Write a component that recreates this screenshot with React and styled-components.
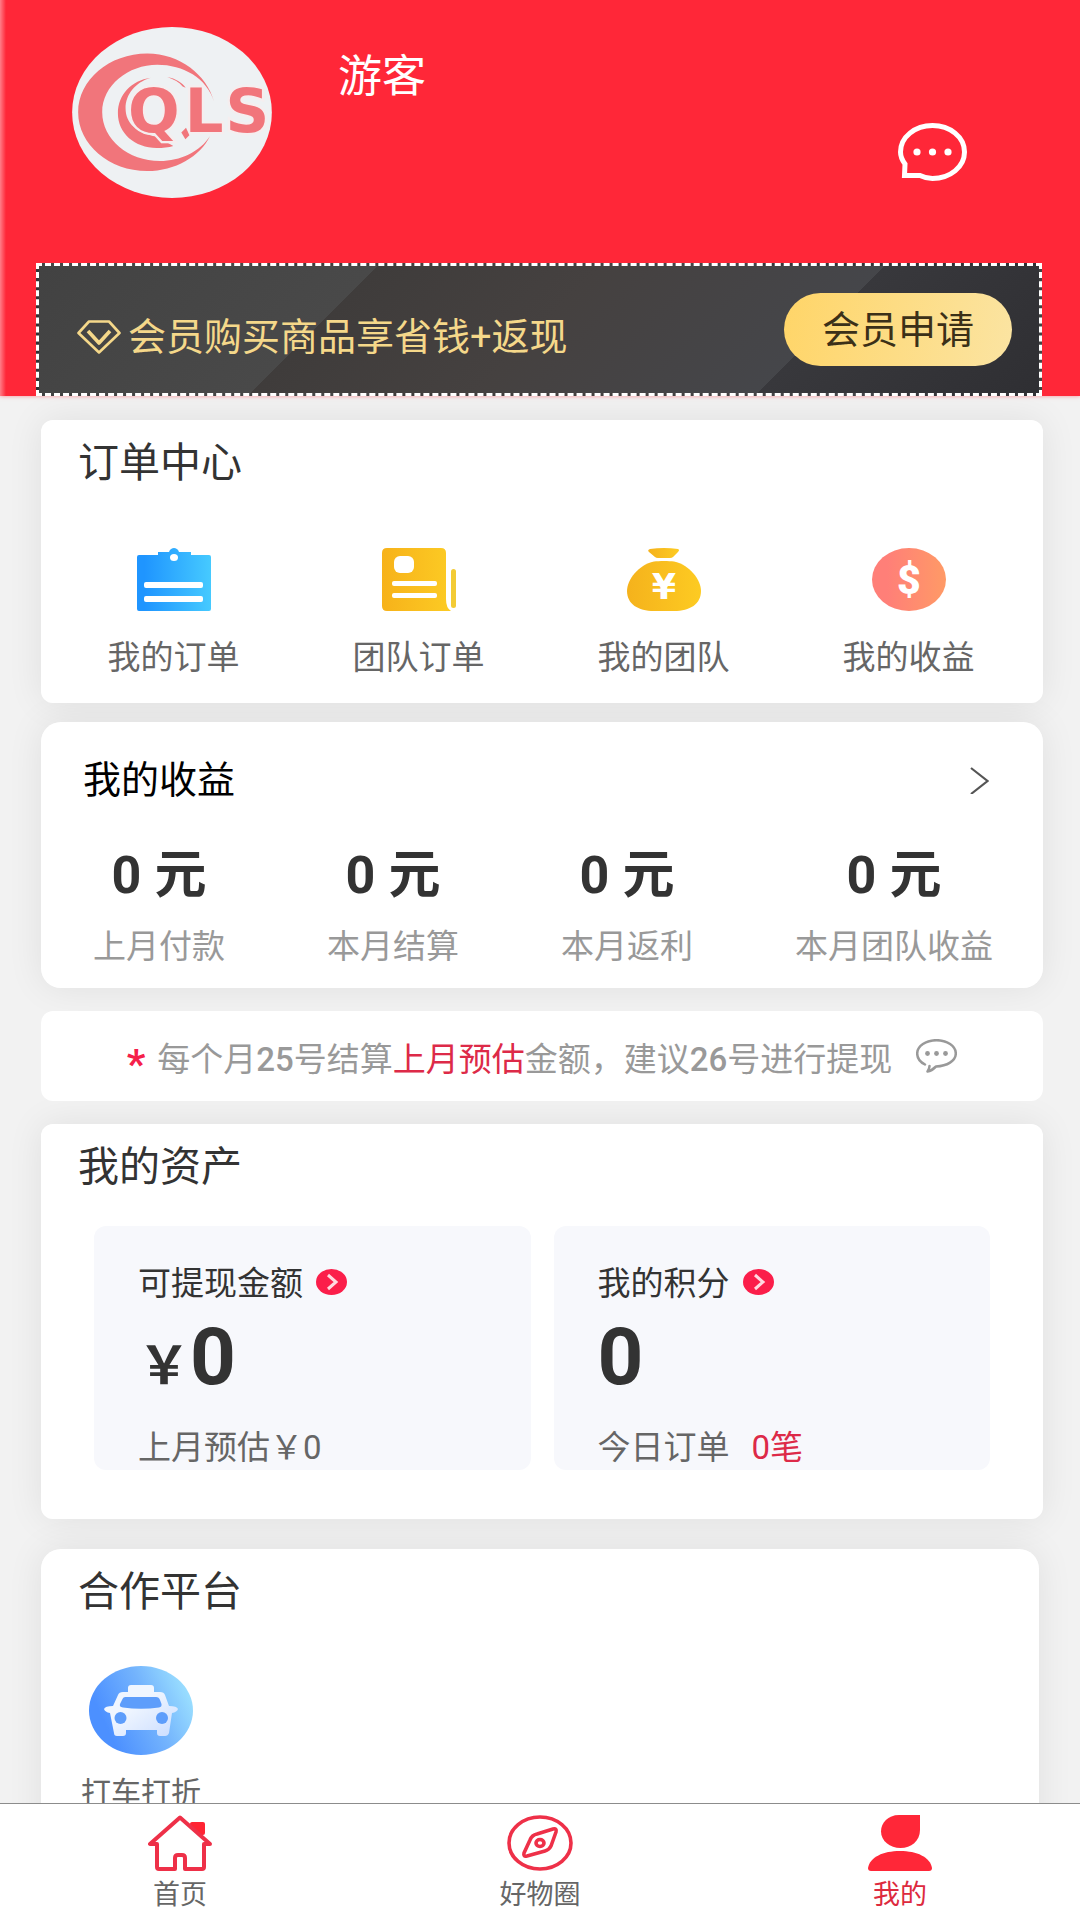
import React from "react";
import styled, { createGlobalStyle } from "styled-components";

const orderLinks = [
  { label: "我的订单", icon: <ClipboardIcon /> },
  { label: "团队订单", icon: <NewsIcon /> },
  { label: "我的团队", icon: <MoneyBagIcon /> },
  { label: "我的收益", icon: <DollarIcon /> },
];

const incomeStats = [
  { label: "上月付款", value: 0 },
  { label: "本月结算", value: 0 },
  { label: "本月返利", value: 0 },
  { label: "本月团队收益", value: 0 },
];

const tabs = [
  { label: "首页", icon: <HomeIcon /> },
  { label: "好物圈", icon: <CompassIcon /> },
  { label: "我的", icon: <UserIcon />, active: true },
];

export default function App() {
  return (
    <Shell>
      <GlobalStyle />
      <Content>
        <Header>
          <Profile>
            <Logo />
            <UserName>游客</UserName>
            <MessageButton type="button" aria-label="消息">
              <MessageIcon />
            </MessageButton>
          </Profile>
          <Banner>
            <BannerText>
              <DiamondIcon />
              会员购买商品享省钱+返现
            </BannerText>
            <ApplyButton type="button">会员申请</ApplyButton>
          </Banner>
        </Header>

        <Cards>
          <Card>
            <CardTitle>订单中心</CardTitle>
            <OrderGrid>
              {orderLinks.map((item) => (
                <OrderLink href="#" key={item.label}>
                  {item.icon}
                  {item.label}
                </OrderLink>
              ))}
            </OrderGrid>
          </Card>

          <Card $gap="19px" $radius="20px">
            <IncomeHead href="#">
              <IncomeTitle>我的收益</IncomeTitle>
              <ChevronIcon />
            </IncomeHead>
            <StatRow>
              {incomeStats.map((item) => (
                <Stat key={item.label}>
                  <StatValue>{item.value} 元</StatValue>
                  <StatLabel>{item.label}</StatLabel>
                </Stat>
              ))}
            </StatRow>
          </Card>

          <Notice>
            <Star>*</Star>
            <p>
              每个月<b>25</b>号结算<em>上月预估</em>金额，建议<b>26</b>号进行提现
            </p>
            <CommentIcon />
          </Notice>

          <Card $gap="23px">
            <CardTitle>我的资产</CardTitle>
            <AssetGrid>
              <Asset>
                <AssetLink href="#">
                  可提现金额
                  <ArrowIcon />
                </AssetLink>
                <AssetValue>
                  <small>￥</small>0
                </AssetValue>
                <AssetNote>上月预估￥0</AssetNote>
              </Asset>
              <Asset>
                <AssetLink href="#">
                  我的积分
                  <ArrowIcon />
                </AssetLink>
                <AssetValue>0</AssetValue>
                <AssetNote>
                  今日订单<em>0笔</em>
                </AssetNote>
              </Asset>
            </AssetGrid>
          </Card>

          <Card $gap="30px" $radius="20px" $inset="4px">
            <CardTitle>合作平台</CardTitle>
            <PartnerRow>
              <PartnerLink href="#">
                <TaxiIcon />
                打车打折
              </PartnerLink>
            </PartnerRow>
          </Card>
        </Cards>
      </Content>

      <TabBar>
        {tabs.map((tab) => (
          <Tab href="#" key={tab.label} $active={tab.active}>
            {tab.icon}
            {tab.label}
          </Tab>
        ))}
      </TabBar>
    </Shell>
  );
}

function Logo() {
  return (
    <svg width="200" height="171" viewBox="37 22 598 512" role="img" aria-label="QLS">
      <ellipse cx="336" cy="278" rx="299" ry="256" fill="#eef1f3" />
      <g fill="#f1757b">
        <path d="M462 245C440 165 360 101 262 101C148 101 55 180 55 277C55 374 148 453 262 453C345 453 420 410 450 348C420 395 360 423 300 423C205 423 127 358 127 277C127 197 205 135 292 135C370 135 440 175 462 245Z" />
        <path d="M272 174C215 182 174 225 174 280C174 340 225 384 290 384C310 384 325 382 340 378L290 350C230 340 197 310 197 265C197 225 225 188 272 174Z" />
        <path d="M322 172C346 177 366 188 377 204L368 200C358 188 342 179 322 172Z" />
      </g>
      <text
        x="204 374 496"
        y="337"
        fontFamily="DejaVu Sans, sans-serif"
        fontWeight="700"
        fontSize="182"
        fill="#f1757b"
        stroke="#f5eeef"
        strokeWidth="14"
        paintOrder="stroke"
      >
        QLS
      </text>
      <path d="M364 338L378 324L388 346L376 358Z" fill="#f1757b" />
    </svg>
  );
}

function MessageIcon() {
  return (
    <svg width="69" height="58" viewBox="0 0 69 58" fill="none" stroke="#fff" strokeWidth="5">
      <path d="M7 41C4 37 2.5 33 2.5 29C2.5 14 17 2.5 34.5 2.5S66.5 14 66.5 29S52 55.5 34.5 55.5C29 55.5 25 54 22 52.5H6.5Z" />
      <g fill="#fff" stroke="none">
        <circle cx="19" cy="29" r="3.6" />
        <circle cx="34.5" cy="29" r="3.6" />
        <circle cx="50" cy="29" r="3.6" />
      </g>
    </svg>
  );
}

function DiamondIcon() {
  return (
    <svg width="44" height="34" viewBox="0 0 44 34" fill="none" stroke="currentColor" strokeWidth="2.6" strokeLinejoin="round">
      <path d="M12 1.5H32L42.5 13L22 32.5L1.5 13Z" />
      <path d="M11 11L22 23L33 11" strokeWidth="3.6" />
    </svg>
  );
}

function ClipboardIcon() {
  return (
    <svg width="74" height="63" viewBox="0 0 74 63">
      <linearGradient id="clip" x1="0" x2="1" y1="0" y2="0">
        <stop offset="0.1" stopColor="#1f95ff" />
        <stop offset="1" stopColor="#46caff" />
      </linearGradient>
      <path
        fill="url(#clip)"
        d="M2 7H21V4H32C33 1 35 0 37 0S41 1 42 4H54V7H72Q74 7 74 9V61Q74 63 72 63H2Q0 63 0 61V9Q0 7 2 7Z"
      />
      <g fill="#fff">
        <ellipse cx="37" cy="9.5" rx="4" ry="3.5" />
        <rect x="7" y="34" width="59" height="6" rx="2" />
        <rect x="7" y="48" width="59" height="6" rx="2" />
      </g>
    </svg>
  );
}

function NewsIcon() {
  return (
    <svg width="74" height="63" viewBox="0 0 74 63">
      <linearGradient id="news" x1="0" x2="1" y1="0" y2="0">
        <stop offset="0" stopColor="#f7b21a" />
        <stop offset="1" stopColor="#fccb24" />
      </linearGradient>
      <path fill="url(#news)" d="M5 0H59Q64 0 64 5V51Q64 60 69 63H5Q0 63 0 58V5Q0 0 5 0Z" />
      <rect x="69" y="21" width="5" height="39" rx="2.5" fill="#f3cb35" />
      <g fill="#fff">
        <rect x="12" y="8" width="20" height="17" rx="6" />
        <rect x="10" y="33" width="45" height="5" rx="2" />
        <rect x="10" y="45" width="45" height="5" rx="2" />
      </g>
    </svg>
  );
}

function MoneyBagIcon() {
  return (
    <svg width="74" height="63" viewBox="0 0 74 63">
      <linearGradient id="bag" x1="0" x2="1" y1="0" y2="0">
        <stop offset="0" stopColor="#f5b21c" />
        <stop offset="1" stopColor="#fdcb22" />
      </linearGradient>
      <g fill="url(#bag)">
        <path d="M23 1Q37 -1 51 1Q53 2 51 4L46 9Q45 10 43 10H31Q29 10 28 9L22 4Q20 2 23 1Z" />
        <path d="M27 13.5C32 12.8 42 12.8 47 13.5C63 17 74 32 74 43C74 56 63 63 47 63H27C11 63 0 56 0 43C0 32 11 17 27 13.5Z" />
      </g>
      <text x="37" y="51" textAnchor="middle" fontFamily="DejaVu Sans, sans-serif" fontWeight="700" fontSize="35" fill="#fff">
        ¥
      </text>
    </svg>
  );
}

function DollarIcon() {
  return (
    <svg width="74" height="63" viewBox="0 0 74 63">
      <linearGradient id="coin" x1="0" x2="1" y1="0" y2="0">
        <stop offset="0.2" stopColor="#ff7f78" />
        <stop offset="1" stopColor="#ff9a66" />
      </linearGradient>
      <ellipse cx="37" cy="31.5" rx="37" ry="31.5" fill="url(#coin)" />
      <text x="37" y="46" textAnchor="middle" fontFamily="Roboto, sans-serif" fontWeight="900" fontSize="41" fill="#fff">
        $
      </text>
    </svg>
  );
}

function ChevronIcon() {
  return (
    <svg width="19" height="28" viewBox="0 0 19 28" fill="none" stroke="#555" strokeWidth="2.2">
      <path d="M1 2L17.5 15L1 28" />
    </svg>
  );
}

function CommentIcon() {
  return (
    <svg width="41" height="34" viewBox="0 0 41 34" fill="none" stroke="#999" strokeWidth="2.5" strokeLinejoin="round" strokeLinecap="round">
      <path d="M9 25.5C4 23 1.2 19 1.2 14.5C1.2 7 10 1.2 20.5 1.2S39.8 7 39.8 14.5S31 27 20 27.5C17.5 30 14.5 32 11.5 32.5C13 30.5 13.5 29 13.5 27" />
      <g fill="#999" stroke="none">
        <circle cx="11.5" cy="14.5" r="2.4" />
        <circle cx="20.5" cy="14.5" r="2.4" />
        <circle cx="29.5" cy="14.5" r="2.4" />
      </g>
    </svg>
  );
}

function ArrowIcon() {
  return (
    <svg width="31" height="30" viewBox="0 0 31 30">
      <ellipse cx="15.5" cy="13" rx="15.5" ry="13" fill="#fb1e4a" />
      <path d="M12 6L20 13L12 20" fill="none" stroke="#ffd9e0" strokeWidth="3" />
    </svg>
  );
}

function TaxiIcon() {
  return (
    <svg width="104" height="89" viewBox="0 0 104 89">
      <linearGradient id="disc" x1="0" x2="1" y1="0.7" y2="0.3">
        <stop offset="0.15" stopColor="#4c90ff" />
        <stop offset="0.6" stopColor="#74b4fd" />
        <stop offset="1" stopColor="#9de2ff" />
      </linearGradient>
      <linearGradient id="car" x1="0" x2="1" y1="0" y2="1">
        <stop offset="0.4" stopColor="#f0f6ff" />
        <stop offset="1" stopColor="#c9dcff" />
      </linearGradient>
      <ellipse cx="52" cy="44.5" rx="52" ry="44.5" fill="url(#disc)" />
      <path
        fill="url(#car)"
        d="M42 19H62Q65 19 65 22V26H71Q75 26 76 29L80 40Q88 40 89 43Q88 46 83 47L80 67Q79 70 76 70H71Q68 70 68 67V64H37V67Q37 70 34 70H28Q25 70 25 67L21 47Q16 46 15 43Q16 40 24 40L29 29Q30 26 34 26H39V22Q39 19 42 19Z"
      />
      <g fill="#5d9dfb">
        <path d="M36 31H67Q70 31 71 34L72.5 38Q73 41 70 41.5Q52 44 34 41.5Q30 41 31 38L33 34Q34 31 36 31Z" />
        <circle cx="31.5" cy="52" r="6" />
        <circle cx="73" cy="52" r="6" />
      </g>
    </svg>
  );
}

function HomeIcon() {
  return (
    <svg width="64" height="56" viewBox="0 0 64 56" fill="none" stroke="#ee3048" strokeWidth="4" strokeLinejoin="round">
      <path d="M44 9H55V18L52 17Z" fill="#ff2433" stroke="#ff2433" />
      <path d="M32 2.5L2 29H9V52Q9 54 11 54H27V43Q27 40 30 40H34Q37 40 37 43V54H54Q56 54 56 52V29H62Z" />
    </svg>
  );
}

function CompassIcon() {
  return (
    <svg width="66" height="56" viewBox="0 0 66 56" fill="none" stroke="#ee3048" strokeWidth="3.6" strokeLinejoin="round">
      <ellipse cx="33" cy="28" rx="31" ry="26" />
      <path d="M49 17L44 31Q42 35 38 36L20 41Q16 42 17 38L23 25Q25 20 30 19L46 14Q50 13 49 17Z" />
      <ellipse cx="33" cy="28" rx="4" ry="3.5" />
    </svg>
  );
}

function UserIcon() {
  return (
    <svg width="64" height="56" viewBox="0 0 64 56" fill="#ff2738">
      <path d="M31 0H52V15C52 26 43 33 32.5 33S13 26 13 16.5C13 8 20 0 31 0Z" />
      <path d="M0 53C2 42 15 36 32 36S62 42 64 53Q64 56 61 56H3Q0 56 0 53Z" />
    </svg>
  );
}

const GlobalStyle = createGlobalStyle`
  * {
    box-sizing: border-box;
  }
  body {
    margin: 0;
    background: #f2f2f2;
    color: #333;
    font-family: Roboto, "Noto Sans CJK SC", sans-serif;
    font-size: 33px;
    line-height: 40px;
  }
  h1, h2, p {
    margin: 0;
    font-weight: 400;
  }
  a {
    color: inherit;
    text-decoration: none;
  }
  em {
    color: #dd2a48;
    font-style: normal;
  }
  button {
    border: 0;
    padding: 0;
    background: none;
    font: inherit;
    cursor: pointer;
  }
  svg {
    display: block;
    flex: none;
  }
`;

const Shell = styled.div`
  display: flex;
  flex-direction: column;
  height: 100vh;
`;

const Content = styled.main`
  flex: 1;
  min-height: 0;
  overflow-y: auto;
  scrollbar-width: none;
  isolation: isolate;
`;

const Header = styled.header`
  background: linear-gradient(to right, rgba(255, 255, 255, 0.4), transparent 6px) #ff2738;
  box-shadow: 0 0 4px rgba(255, 39, 56, 0.5);
`;

const Profile = styled.div`
  display: flex;
  align-items: flex-start;
  padding: 27px 113px 65px 72px;
`;

const UserName = styled.h1`
  margin: 26px 0 0 66px;
  color: #fff;
  font-size: 44px;
  line-height: 48px;
`;

const MessageButton = styled.button`
  margin: 96px 0 0 auto;
`;

const Banner = styled.div`
  display: flex;
  align-items: center;
  justify-content: space-between;
  margin: 0 38px 0 36px;
  min-height: 133px;
  padding: 0 27px 0 38px;
  border: 3px dashed #fff;
  background:
    linear-gradient(135deg, #424242, #494949 30%, transparent 30%),
    linear-gradient(135deg, #3f3c3b 30%, #454140 50%, #45464a 75%, #38383c 75%, #2f2f33);
`;

const BannerText = styled.p`
  display: flex;
  align-items: center;
  gap: 7px;
  padding-top: 14px;
  color: #f5d88a;
  font-size: 38px;
`;

const ApplyButton = styled.button`
  width: 228px;
  height: 73px;
  border-radius: 42px;
  background: linear-gradient(100deg, #ffd568, #fbe4a2);
  color: #3b3018;
  font-size: 38px;
`;

const Cards = styled.div`
  padding: 24px 37px 40px 41px;
`;

const Card = styled.section`
  position: relative;
  margin-top: ${(props) => props.$gap || 0};
  margin-right: ${(props) => props.$inset || 0};
  border-radius: ${(props) => props.$radius || "12px"};
  background: #fff;

  /* shadow sits behind every card so it never tints a neighbour */
  &::before {
    content: "";
    position: absolute;
    inset: 0;
    z-index: -1;
    border-radius: inherit;
    box-shadow: 0 0 36px rgba(0, 0, 0, 0.08);
  }
`;

const CardTitle = styled.h2`
  padding: 19px 37px 0;
  font-size: 41px;
  line-height: 48px;
`;

const OrderGrid = styled.div`
  display: grid;
  grid-template-columns: repeat(4, 1fr);
  padding: 61px 12px 25px 10px;
`;

const OrderLink = styled.a`
  display: flex;
  flex-direction: column;
  align-items: center;
  gap: 27px;
  color: #666;
`;

const IncomeHead = styled.a`
  display: flex;
  align-items: center;
  justify-content: space-between;
  padding: 38px 54px 0 42px;
`;

const IncomeTitle = styled.h2`
  color: #000;
  font-size: 38px;
`;

const StatRow = styled.div`
  display: flex;
  justify-content: space-between;
  padding: 46px 50px 21px 52px;
`;

const Stat = styled.div`
  display: flex;
  flex-direction: column;
  align-items: center;
  gap: 21px;
`;

const StatValue = styled.strong`
  font-size: 52px;
  line-height: 60px;
`;

const StatLabel = styled.span`
  color: #999;
`;

const Notice = styled.div`
  display: flex;
  align-items: center;
  justify-content: center;
  min-height: 90px;
  margin-top: 23px;
  border-radius: 12px;
  background: #fff;
  color: #999;

  p {
    padding-top: 8px;
    margin: 0 24px 0 12px;
  }
  b {
    font-weight: 500;
  }
`;

const Star = styled.span`
  padding-top: 16px;
  color: #f5204a;
  font-size: 41px;
  font-weight: 700;
`;

const AssetGrid = styled.div`
  display: grid;
  grid-template-columns: 1fr 1fr;
  gap: 23px;
  padding: 35px 53px 49px 53px;
`;

const Asset = styled.div`
  padding: 38px 44px 2px;
  border-radius: 12px;
  background: #f7f8fc;
`;

const AssetLink = styled.a`
  display: flex;
  align-items: center;
  gap: 13px;
`;

const AssetValue = styled.p`
  margin: 13px 0 31px;
  font-size: 80px;
  font-weight: 700;
  line-height: 80px;

  small {
    font-size: 52px;
    line-height: 52px;
  }
`;

const AssetNote = styled.p`
  color: #666;

  em {
    margin-left: 22px;
  }
`;

const PartnerRow = styled.div`
  display: flex;
  padding: 50px 40px 40px;
`;

const PartnerLink = styled.a`
  display: flex;
  flex-direction: column;
  align-items: center;
  gap: 18px;
  color: #666;
  font-size: 30px;
`;

const TabBar = styled.nav`
  display: grid;
  grid-template-columns: repeat(3, 1fr);
  border-top: 1px solid #8c8c8c;
  background: #fff;
`;

const Tab = styled.a`
  display: flex;
  flex-direction: column;
  align-items: center;
  padding: 11px 0 5px;
  gap: 4px;
  color: ${(props) => (props.$active ? "#dd2a3e" : "#666")};
  font-size: 27px;
`;
